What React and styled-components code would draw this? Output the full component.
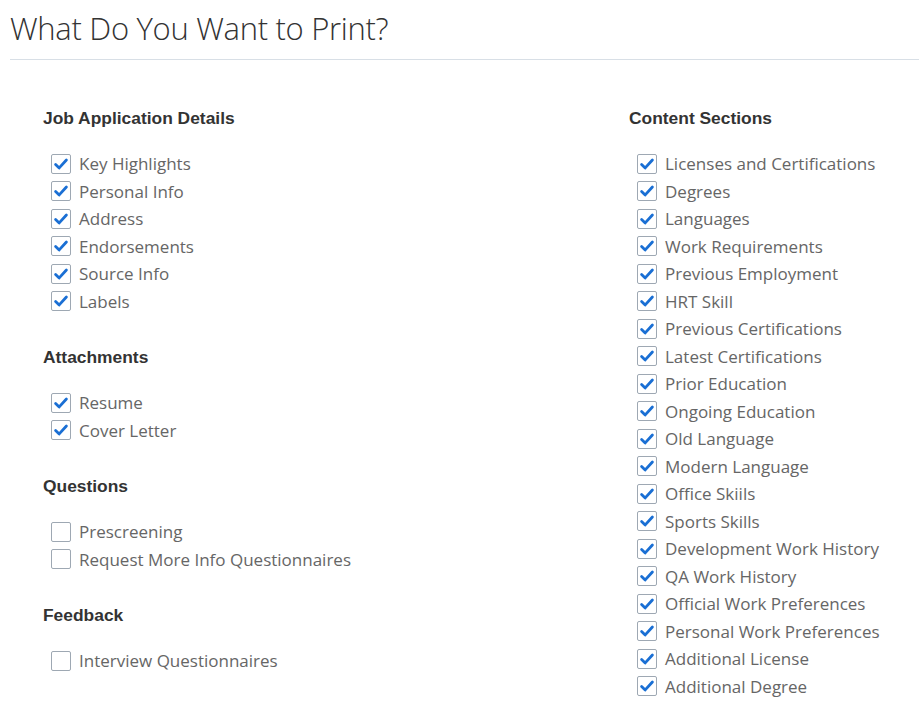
import React from "react";
import styled, { createGlobalStyle } from "styled-components";

// print options page: two columns of checkbox groups
const GlobalStyle = createGlobalStyle`
  html, body {
    margin: 0;
    background: #fff;
    overflow: hidden;
  }
`;

const leftGroups = [
  {
    title: "Job Application Details",
    items: [
      ["Key Highlights", true],
      ["Personal Info", true],
      ["Address", true],
      ["Endorsements", true],
      ["Source Info", true],
      ["Labels", true],
    ],
  },
  {
    title: "Attachments",
    items: [
      ["Resume", true],
      ["Cover Letter", true],
    ],
  },
  {
    title: "Questions",
    items: [
      ["Prescreening", false],
      ["Request More Info Questionnaires", false],
    ],
  },
  {
    title: "Feedback",
    items: [["Interview Questionnaires", false]],
  },
];

const rightGroups = [
  {
    title: "Content Sections",
    items: [
      "Licenses and Certifications",
      "Degrees",
      "Languages",
      "Work Requirements",
      "Previous Employment",
      "HRT Skill",
      "Previous Certifications",
      "Latest Certifications",
      "Prior Education",
      "Ongoing Education",
      "Old Language",
      "Modern Language",
      "Office Skiils",
      "Sports Skills",
      "Development Work History",
      "QA Work History",
      "Official Work Preferences",
      "Personal Work Preferences",
      "Additional License",
      "Additional Degree",
    ].map((t) => [t, true]),
  },
];

function CheckItem({ label, checked }) {
  return (
    <Row>
      <Box>
        {checked && (
          <svg width="16" height="16" viewBox="0 0 16 16">
            <path
              d="M2.6 8.4 L6.2 11.9 L13.4 4"
              fill="none"
              stroke="#1a6fd4"
              strokeWidth="2.8"
              strokeLinecap="round"
              strokeLinejoin="round"
            />
          </svg>
        )}
      </Box>
      <Label>{label}</Label>
    </Row>
  );
}

function Group({ title, items, more }) {
  return (
    <Section>
      <GroupTitle>{title}</GroupTitle>
      <List>
        {items.map(([label, checked]) => (
          <CheckItem key={label} label={label} checked={checked} />
        ))}
        {more && (
          <Row>
            <Box />
          </Row>
        )}
      </List>
    </Section>
  );
}

export default function App() {
  return (
    <Page>
      <GlobalStyle />
      <Header>
        <Title>What Do You Want to Print?</Title>
      </Header>
      <Columns>
        <Column>
          {leftGroups.map((g) => (
            <Group key={g.title} {...g} />
          ))}
        </Column>
        <Column>
          {rightGroups.map((g) => (
            <Group key={g.title} {...g} more />
          ))}
        </Column>
      </Columns>
    </Page>
  );
}

const Page = styled.div`
  width: 919px;
  height: 702px;
  overflow: hidden;
  background: #fff;
`;

const Header = styled.div`
  margin-left: 10px;
  height: 60px;
  border-bottom: 1px solid #d8dfe6;
  box-sizing: border-box;
`;

const Title = styled.h1`
  margin: 0;
  padding-top: 8px;
  font-family: "Open Sans", "Noto Sans", sans-serif;
  font-weight: 300;
  font-size: 31px;
  line-height: 40px;
  color: #333;
  letter-spacing: -0.3px;
`;

const Columns = styled.div`
  display: grid;
  grid-template-columns: 586px 1fr;
  padding: 48px 0 0 43px;
`;

const Column = styled.div`
  display: flex;
  flex-direction: column;
  gap: 32px;
`;

const Section = styled.section`
  display: flex;
  flex-direction: column;
  gap: 22px;
`;

const GroupTitle = styled.h3`
  margin: 0;
  font-family: "Liberation Sans", Arial, sans-serif;
  font-weight: bold;
  font-size: 17.4px;
  line-height: 20px;
  color: #333;
`;

const List = styled.div`
  display: flex;
  flex-direction: column;
  padding-left: 8px;
`;

const Row = styled.div`
  display: flex;
  align-items: center;
  height: 27.5px;
  gap: 8px;
`;

const Box = styled.span`
  width: 20px;
  height: 20px;
  box-sizing: border-box;
  border: 1px solid #9ea8b3;
  border-radius: 2px;
  display: flex;
  align-items: center;
  justify-content: center;
  flex-shrink: 0;
  background: #fff;
`;

const Label = styled.span`
  font-family: "Open Sans", "Noto Sans", sans-serif;
  font-size: 17px;
  color: #666;
  white-space: nowrap;
`;
